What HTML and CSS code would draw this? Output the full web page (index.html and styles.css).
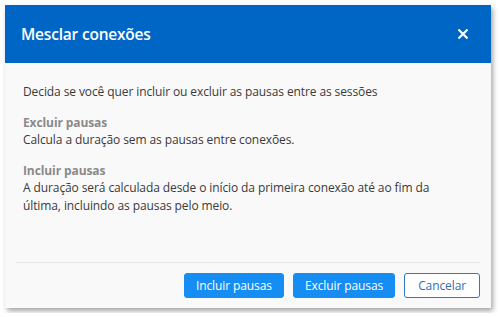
FILE: index.html
```html
<!DOCTYPE html>
<html lang="pt">
<head>
<meta charset="utf-8">
<link rel="stylesheet" href="styles.css">
</head>
<body>
<div class="dialog">
  <div class="header">
    <h1 class="title">Mesclar conexões</h1>
    <button class="close" aria-label="Fechar">
      <svg width="10" height="10" viewBox="0 0 10 10"><path d="M1.2 1.2 L8.8 8.8 M8.8 1.2 L1.2 8.8" stroke="#fff" stroke-width="2.1" stroke-linecap="square"/></svg>
    </button>
  </div>
  <div class="content">
    <p class="intro">Decida se você quer incluir ou excluir as pausas entre as sessões</p>
    <div class="option">
      <div class="label">Excluir pausas</div>
      <div class="desc">Calcula a duração sem as pausas entre conexões.</div>
    </div>
    <div class="option">
      <div class="label">Incluir pausas</div>
      <div class="desc">A duração será calculada desde o início da primeira conexão até ao fim da última, incluindo as pausas pelo meio.</div>
    </div>
  </div>
  <div class="footer">
    <button class="btn primary">Incluir pausas</button>
    <button class="btn primary">Excluir pausas</button>
    <button class="btn secondary">Cancelar</button>
  </div>
</div>
</body>
</html>
```
FILE: styles.css
```css
html, body { margin: 0; padding: 0; background: #fff; }
body { padding: 5px; font-family: "Open Sans", "Noto Sans", sans-serif; }
.dialog {
  width: 486px;
  height: 303px;
  background: #f9f9f9;
  box-shadow: 2px 3px 5px rgba(0,0,0,0.35);
  display: flex;
  flex-direction: column;
}
.header {
  height: 58px;
  background: #0066c6;
  display: flex;
  align-items: center;
  justify-content: space-between;
  padding: 0 23px 0 16px;
  flex-shrink: 0;
}
.title {
  margin: 0;
  color: #fff;
  font-size: 15.5px;
  font-weight: 600;
  letter-spacing: -0.2px;
}
.close {
  background: none;
  border: 0;
  padding: 0;
  display: flex;
  cursor: pointer;
}
.content {
  flex: 1;
  padding: 20px 40px 0 18px;
  color: #3a3a3a;
  font-size: 12px;
  letter-spacing: -0.1px;
  line-height: 17.5px;
}
.intro { margin: 0 0 13px; }
.option { margin-bottom: 13px; }
.label { color: #8a8a8a; font-weight: 700; }
.footer {
  margin: 0 11px;
  border-top: 1px solid #e6e6e6;
  padding: 10px 0 10px;
  display: flex;
  justify-content: flex-end;
  gap: 9px;
}
.btn {
  height: 25px;
  font-family: inherit;
  font-size: 12px;
  letter-spacing: -0.1px;
  border-radius: 3px;
  padding: 0 11px;
  cursor: pointer;
}
.primary { background: #168df2; color: #fff; border: 1px solid #168df2; }
.secondary { background: #fff; color: #2f6fb0; border: 1px solid #2f78c4; padding: 0 13px; }
```
